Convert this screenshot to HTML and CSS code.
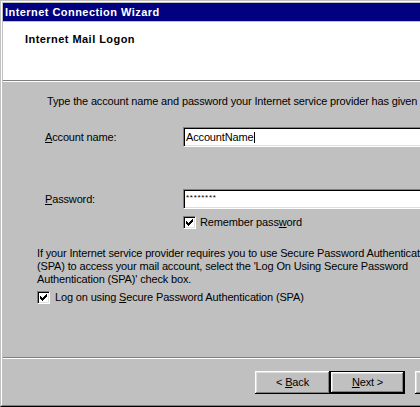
FILE: index.html
```html
<!DOCTYPE html>
<html lang="en">
<head>
<meta charset="utf-8">
<title>Internet Connection Wizard</title>
<link rel="stylesheet" href="styles.css">
</head>
<body>
<div class="window">
  <div class="window-inner">
    <div class="titlebar">Internet Connection Wizard</div>
    <div class="header">
      <div class="header-title">Internet Mail Logon</div>
    </div>
    <div class="content">
      <p class="intro">Type the account name and password your Internet service provider has given</p>
      <div class="field field-account">
        <span class="field-label"><u>A</u>ccount name:</span>
        <div class="textbox"><span>AccountName</span><span class="caret"></span></div>
      </div>
      <div class="field field-password">
        <span class="field-label"><u>P</u>assword:</span>
        <div class="textbox"><span class="mask">********</span></div>
      </div>
      <div class="check check-remember">
        <span class="checkbox"><svg width="7" height="7" viewBox="0 0 7 7" shape-rendering="crispEdges"><path fill="#000" d="M6 0h1v1h-1z M5 1h2v1h-2z M0 2h1v1h-1z M4 2h3v1h-3z M0 3h2v1h-2z M3 3h3v1h-3z M0 4h5v1h-5z M1 5h3v1h-3z M2 6h1v1h-1z"/></svg></span>
        <span class="check-text">Remember pass<u>w</u>ord</span>
      </div>
      <p class="spa-text">If your Internet service provider requires you to use Secure Password Authentication<br>(SPA) to access your mail account, select the 'Log On Using Secure Password<br>Authentication (SPA)' check box.</p>
      <div class="check check-spa">
        <span class="checkbox"><svg width="7" height="7" viewBox="0 0 7 7" shape-rendering="crispEdges"><path fill="#000" d="M6 0h1v1h-1z M5 1h2v1h-2z M0 2h1v1h-1z M4 2h3v1h-3z M0 3h2v1h-2z M3 3h3v1h-3z M0 4h5v1h-5z M1 5h3v1h-3z M2 6h1v1h-1z"/></svg></span>
        <span class="check-text">Log on using <u>S</u>ecure Password Authentication (SPA)</span>
      </div>
    </div>
    <div class="footer">
      <div class="btn"><span>&lt; <u>B</u>ack</span></div>
      <div class="btn btn-default"><span><u>N</u>ext &gt;</span></div>
      <div class="btn btn-cancel"><span>Cancel</span></div>
    </div>
  </div>
</div>
</body>
</html>
```

FILE: styles.css
```css
html, body {
  margin: 0;
  padding: 0;
  overflow: hidden;
  background: #c0c0c0;
}

body {
  font-family: "Liberation Sans", Arial, sans-serif;
  font-size: 11px;
  line-height: 13px;
  letter-spacing: -0.15px;
  color: #000;
}

p {
  margin: 0;
}

.window {
  width: 520px;
  height: 407px;
  box-sizing: border-box;
  border-top: 1px solid #c0c0c0;
  border-left: 1px solid #c0c0c0;
  border-bottom: 1px solid #000;
  background: #c0c0c0;
}

.window-inner {
  height: 100%;
  box-sizing: border-box;
  border-top: 1px solid #fff;
  border-left: 1px solid #fff;
  border-bottom: 1px solid #808080;
  padding: 1px 0 0 1px;
  display: flex;
  flex-direction: column;
}

.titlebar {
  height: 18px;
  box-sizing: border-box;
  flex: none;
  background: #000080;
  color: #fff;
  font-weight: bold;
  letter-spacing: 0.45px;
  padding: 3px 0 0 2px;
  margin-bottom: 1px;
  white-space: nowrap;
}

.header {
  height: 59px;
  box-sizing: border-box;
  flex: none;
  background: #fff;
  border-bottom: 1px solid #808080;
  padding: 11px 0 0 22px;
}

.header-title {
  font-weight: bold;
  letter-spacing: 0.45px;
  white-space: nowrap;
}

.content {
  flex: 1;
  border-top: 1px solid #fff;
  padding: 13px 0 0 34px;
  white-space: nowrap;
}

.intro {
  margin-left: 10px;
}

.field {
  display: flex;
  align-items: center;
  height: 20px;
  margin-left: 8px;
}

.field-account {
  margin-top: 19px;
}

.field-password {
  margin-top: 42px;
}

.field-label {
  width: 138px;
  flex: none;
}

.textbox {
  width: 300px;
  height: 20px;
  box-sizing: border-box;
  flex: none;
  background: #fff;
  border: 1px solid;
  border-color: #808080 #fff #fff #808080;
  box-shadow: inset 1px 1px #000, inset -1px -1px #dfdfdf;
  padding-left: 2px;
  display: flex;
  align-items: center;
}

.caret {
  display: inline-block;
  width: 1px;
  height: 11px;
  background: #000;
  margin-left: 1px;
}

.mask {
  font-size: 8px;
  letter-spacing: 0.7px;
  margin-top: -3px;
}

.check {
  display: flex;
  align-items: flex-start;
}

.check-remember {
  margin-top: 7px;
  margin-left: 146px;
}

.check-remember .check-text {
  margin-left: 4px;
}

.check-spa {
  margin-top: 5px;
}

.check-spa .check-text {
  margin-left: 5px;
}

.checkbox {
  width: 13px;
  height: 13px;
  box-sizing: border-box;
  flex: none;
  background: #fff;
  border: 1px solid;
  border-color: #808080 #fff #fff #808080;
  box-shadow: inset 1px 1px #000, inset -1px -1px #dfdfdf;
  display: flex;
  align-items: center;
  justify-content: center;
}

.checkbox svg {
  display: block;
}

.spa-text {
  margin-top: 18px;
}

.footer {
  flex: none;
  height: 48px;
  box-sizing: border-box;
  border-top: 1px solid #808080;
  box-shadow: inset 0 1px 0 #fff;
  padding: 13px 0 0 252px;
  display: flex;
  align-items: flex-start;
}

.btn {
  width: 75px;
  height: 23px;
  box-sizing: border-box;
  flex: none;
  background: #c0c0c0;
  display: flex;
  align-items: center;
  justify-content: center;
  white-space: nowrap;
  box-shadow: inset -1px -1px #000, inset 1px 1px #fff, inset -2px -2px #808080, inset 2px 2px #dfdfdf;
}

.btn-default {
  box-shadow: inset 0 0 0 1px #000, inset -2px -2px #000, inset 2px 2px #fff, inset -3px -3px #808080, inset 3px 3px #dfdfdf;
}

.btn-cancel {
  margin-left: 10px;
}
```
